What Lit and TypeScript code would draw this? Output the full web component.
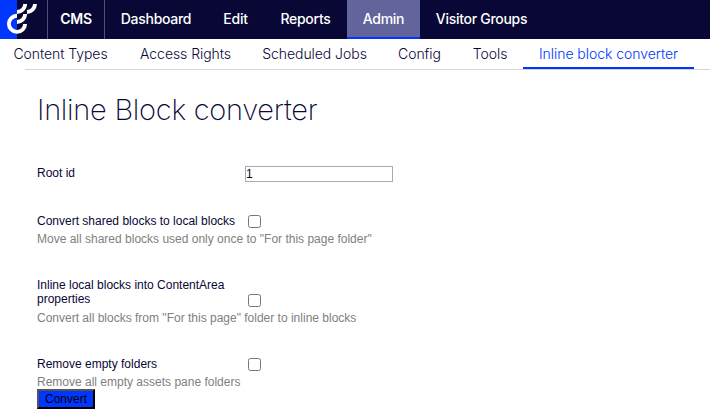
import { LitElement, html, css, svg, nothing } from "lit";
import { customElement, property } from "lit/decorators.js";

@customElement("brand-mark")
class BrandMark extends LitElement {
  static styles = css`
    :host { display: block; width: 47px; height: 39px; flex: none; background: linear-gradient(90deg, #0037ff 17px, #080736 17px); }
    svg { display: block; }
  `;
  render() {
    return html`<svg width="47" height="39" viewBox="0 0 47 39" fill="none" stroke="#fff" stroke-width="3.9">
      ${svg`<path d="M17 15.7A8.1 8.1 0 1 0 25.1 24"/>
      <path d="M17 22A8.2 8.2 0 0 0 25.2 14M17 12A8.2 8.2 0 0 0 25.2 4M27 12A8.2 8.2 0 0 0 35 4"/>`}
    </svg>`;
  }
}

@customElement("option-row")
class OptionRow extends LitElement {
  @property() label = "";
  @property() hint = "";
  static styles = css`
    :host { display: block; color: #080736; font: 12px/14px "Liberation Sans", Arial, sans-serif; }
    .row { display: flex; align-items: flex-start; }
    .label { width: 208px; padding-bottom: var(--label-gap, 0); }
    .hint { color: #808080; margin-top: 4px; white-space: nowrap; }
    input { align-self: flex-end; margin: 0 0 0 3px; width: 13px; height: 13px; }
  `;
  render() {
    return html`<div class="row"><span class="label">${this.label}</span><slot><input type="checkbox" /></slot></div>
      ${this.hint ? html`<div class="hint">${this.hint}</div>` : nothing}`;
  }
}

const sections = [
  { name: "Dashboard", cls: "dashboard" },
  { name: "Edit", cls: "edit" },
  { name: "Reports", cls: "reports" },
  { name: "Admin", cls: "admin active" },
  { name: "Visitor Groups", cls: "visitors" },
];
const tabs = [
  { name: "Content Types", cls: "types" },
  { name: "Access Rights", cls: "rights" },
  { name: "Scheduled Jobs", cls: "jobs" },
  { name: "Config", cls: "config" },
  { name: "Tools", cls: "tools" },
  { name: "Inline block converter", cls: "converter active" },
];

@customElement("app-root")
class AppRoot extends LitElement {
  static styles = css`
    :host { display: block; height: 418px; overflow: hidden; background: #fff; color: #080736; font-family: Inter, sans-serif; }
    * { box-sizing: border-box; }
    header { display: flex; height: 39px; background: #080736; color: #fff; font-size: 14px; font-weight: 500; line-height: 38px; letter-spacing: -0.28px; white-space: nowrap; }
    .product { width: 58px; border: solid #52516f; border-width: 0 1px; text-align: center; font-weight: 600; }
    .section { display: flex; justify-content: center; }
    .dashboard { width: 102px; }
    .edit { width: 57px; }
    .reports { width: 83px; }
    .admin { width: 73px; }
    .visitors { width: 123px; }
    .section.active { background: #61659b; border-bottom: 2px solid #0037ff; }
    nav { display: flex; height: 31px; font-size: 14px; font-weight: 300; line-height: 30px; letter-spacing: -0.05px; white-space: nowrap; background: linear-gradient(#d6d6d6, #d6d6d6) 25px 30px / 100% 1px no-repeat; }
    .tab { display: flex; justify-content: center; height: 30px; flex: none; }
    .types { width: 127px; margin-left: -3px; }
    .rights { width: 123px; }
    .jobs { width: 135px; }
    .config { width: 75px; }
    .tools { width: 66px; }
    .converter { width: 171px; }
    .tab.active { color: #0037ff; border-bottom: 2px solid #0037ff; }
    main { padding: 20px 37px 0; }
    h1 { margin: 0; font-size: 29px; font-weight: 200; line-height: 40px; letter-spacing: -0.27px; white-space: nowrap; }
    .root { margin-top: 36px; }
    .shared { margin-top: 32px; }
    .local { margin-top: 32px; --label-gap: 1px; }
    .empty { margin-top: 32px; }
    .root-id { width: 148px; height: 16px; margin: 0; padding: 0; border: 1px solid #aaa; border-radius: 0; outline: none; background: #fff; color: #080736; font: 12px/14px "Liberation Sans", Arial, sans-serif; }
    button { display: block; width: 58px; height: 20px; margin: 0; padding: 0; border: 2px outset #000; border-radius: 0; background: #0037ff; color: #000; font: 12px/14px "Liberation Sans", Arial, sans-serif; }
  `;
  render() {
    return html`
      <header>
        <brand-mark></brand-mark>
        <div class="product">CMS</div>
        ${sections.map((s) => html`<div class="section ${s.cls}"><span>${s.name}</span></div>`)}
      </header>
      <nav>${tabs.map((t) => html`<div class="tab ${t.cls}"><span>${t.name}</span></div>`)}</nav>
      <main>
        <h1>Inline Block converter</h1>
        <option-row class="root" label="Root id"><input class="root-id" type="text" value="1" /></option-row>
        <option-row class="shared" label="Convert shared blocks to local blocks" hint='Move all shared blocks used only once to "For this page folder"'></option-row>
        <option-row class="local" label="Inline local blocks into ContentArea properties" hint='Convert all blocks from "For this page" folder to inline blocks'></option-row>
        <option-row class="empty" label="Remove empty folders" hint="Remove all empty assets pane folders"></option-row>
        <button>Convert</button>
      </main>
    `;
  }
}
